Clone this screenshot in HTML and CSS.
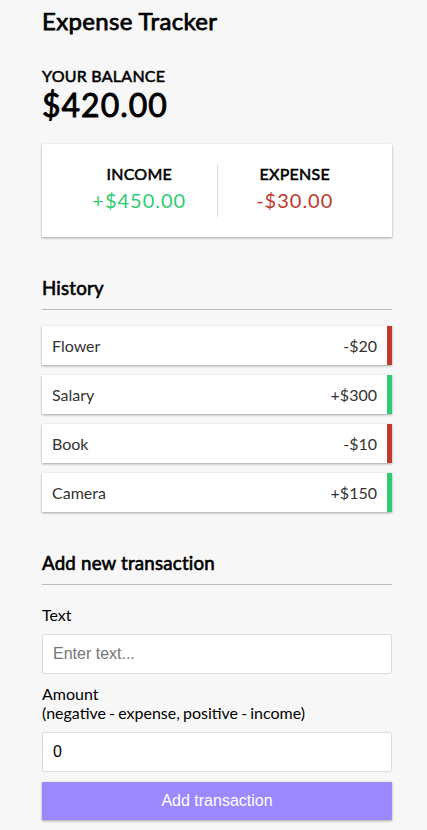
FILE: index.html
```html
<!DOCTYPE html>
<html lang="en">
<head>
<meta charset="UTF-8">
<title>Expense Tracker</title>
<link rel="stylesheet" href="styles.css">
</head>
<body>
<div class="app">
  <h2 class="title">Expense Tracker</h2>
  <div class="container">
    <h4 class="balance-label">Your Balance</h4>
    <h1 class="balance">$420.00</h1>

    <div class="inc-exp-container">
      <div class="inc">
        <h4>Income</h4>
        <p class="money plus">+$450.00</p>
      </div>
      <div class="exp">
        <h4>Expense</h4>
        <p class="money minus">-$30.00</p>
      </div>
    </div>

    <h3 class="section-title">History</h3>
    <ul class="list">
      <li class="minus">Flower <span>-$20</span></li>
      <li class="plus">Salary <span>+$300</span></li>
      <li class="minus">Book <span>-$10</span></li>
      <li class="plus">Camera <span>+$150</span></li>
    </ul>

    <h3 class="section-title">Add new transaction</h3>
    <form class="form">
      <div class="form-control">
        <label class="label" for="text">Text</label>
        <input class="field" type="text" id="text" placeholder="Enter text...">
      </div>
      <div class="form-control">
        <label class="label label-tight" for="amount">Amount <br>(negative - expense, positive - income)</label>
        <input class="field" type="number" id="amount" value="0">
      </div>
      <button class="btn" type="button">Add transaction</button>
    </form>
  </div>
</div>
</body>
</html>
```
FILE: styles.css
```css
* { box-sizing: border-box; }

body {
  margin: 0;
  background-color: #f7f7f7;
  font-family: "Lato", "Liberation Sans", sans-serif;
  color: #000;
}

.app {
  width: 350px;
  margin-left: 42px;
  padding-top: 6px;
}

.title {
  font-size: 24px;
  font-weight: 400;
  -webkit-text-stroke: 0.75px currentColor;
  letter-spacing: 0.35px;
  margin: 0 0 31px;
}

.container { width: 350px; }

.balance-label,
.inc-exp-container h4 {
  margin: 0;
  font-size: 16px;
  font-weight: 400;
  -webkit-text-stroke: 0.55px currentColor;
  letter-spacing: 0.25px;
  text-transform: uppercase;
}

.balance {
  margin: 0;
  font-size: 32px;
  font-weight: 400;
  -webkit-text-stroke: 0.9px currentColor;
  letter-spacing: 1px;
}

.inc-exp-container {
  background-color: #fff;
  box-shadow: 0 1px 3px rgba(0,0,0,0.12), 0 1px 2px rgba(0,0,0,0.24);
  padding: 20px;
  display: flex;
  justify-content: space-between;
  margin: 20px 0;
}

.inc-exp-container > div {
  flex: 1;
  text-align: center;
}

.inc-exp-container > .inc { border-right: 1px solid #dedede; }

.money {
  font-size: 20px;
  letter-spacing: 1px;
  margin: 5px 0;
}
.money.plus { color: #2ecc71; }
.money.minus { color: #c0392b; }

.section-title {
  font-size: 18.72px;
  font-weight: 400;
  -webkit-text-stroke: 0.62px currentColor;
  letter-spacing: 0.2px;
  border-bottom: 1px solid #bbb;
  padding-bottom: 10px;
  margin: 40px 0 10px;
}

.list {
  list-style-type: none;
  padding: 0;
  margin: 16px 0 40px;
}

.list li {
  background-color: #fff;
  box-shadow: 0 1px 3px rgba(0,0,0,0.12), 0 1px 2px rgba(0,0,0,0.24);
  color: #333;
  display: flex;
  justify-content: space-between;
  padding: 10px;
  margin: 10px 0;
  font-size: 16px;
}
.list li:first-child { margin-top: 0; }
.list li.plus { border-right: 5px solid #2ecc71; }
.list li.minus { border-right: 5px solid #c0392b; }

.form { margin: 0; }

.label {
  display: inline-block;
  margin: 10px 0;
  font-size: 16px;
}
.label-tight { word-spacing: -1px; }

.field {
  border: 1px solid #dedede;
  border-radius: 2px;
  display: block;
  font-family: "Liberation Sans", Arial, sans-serif;
  font-size: 16px;
  padding: 10px;
  width: 100%;
  background: #fff;
  color: #000;
}
.field::placeholder { color: #757575; }

.btn {
  cursor: pointer;
  background-color: #9c88ff;
  box-shadow: 0 1px 3px rgba(0,0,0,0.12), 0 1px 2px rgba(0,0,0,0.24);
  color: #fff;
  border: 0;
  display: block;
  font-family: "Liberation Sans", Arial, sans-serif;
  font-size: 16px;
  margin: 10px 0 30px;
  padding: 10px;
  width: 100%;
}
```
